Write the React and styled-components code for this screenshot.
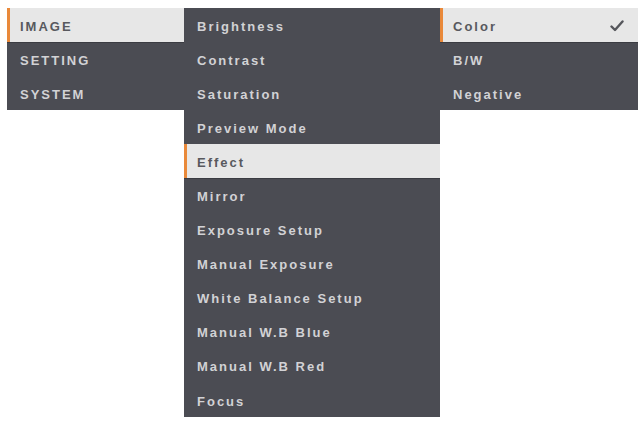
import React from "react";
import styled, { createGlobalStyle } from "styled-components";

const GlobalStyle = createGlobalStyle`
  body {
    margin: 0;
    background: #ffffff;
    font-family: "Liberation Sans", Arial, sans-serif;
  }
`;

const Screen = styled.div`
  display: flex;
  align-items: flex-start;
  padding: 8px 0 0 7px;
  width: 640px;
  height: 421px;
  box-sizing: border-box;
`;

const Column = styled.ul`
  list-style: none;
  margin: 0;
  padding: 0;
  width: ${(p) => p.width}px;
  background: #4b4c53;
`;

const Row = styled.li`
  position: relative;
  display: flex;
  align-items: center;
  justify-content: space-between;
  height: 34.1px;
  padding: 2px 14px 0 13px;
  box-sizing: border-box;
  font-size: 13px;
  font-weight: bold;
  letter-spacing: 2px;
  color: ${(p) => (p.active ? "#58595e" : "#d2d2d5")};
  background: ${(p) => (p.active ? "#e7e7e7" : "transparent")};
  box-shadow: ${(p) => (p.active ? "0 1px 0 #3b3c42" : "none")};

  &::before {
    content: "";
    display: ${(p) => (p.active ? "block" : "none")};
    position: absolute;
    left: 0;
    top: 0;
    bottom: 0;
    width: 3px;
    background: #e9893a;
  }
`;

const Check = () => (
  <svg width="14" height="12" viewBox="0 0 14 12">
    <path d="M1.5 6.5 L5 10 L12.5 1.5" fill="none" stroke="#55565b" strokeWidth="2.4" strokeLinecap="round" strokeLinejoin="round" />
  </svg>
);

const mainMenu = ["IMAGE", "SETTING", "SYSTEM"];
const imageMenu = [
  "Brightness",
  "Contrast",
  "Saturation",
  "Preview Mode",
  "Effect",
  "Mirror",
  "Exposure Setup",
  "Manual Exposure",
  "White Balance Setup",
  "Manual W.B Blue",
  "Manual W.B Red",
  "Focus",
];
const effectMenu = ["Color", "B/W", "Negative"];

export default function App() {
  return (
    <>
      <GlobalStyle />
      <Screen>
        <Column width={177}>
          {mainMenu.map((m) => (
            <Row key={m} active={m === "IMAGE"}>
              {m}
            </Row>
          ))}
        </Column>
        <Column width={256}>
          {imageMenu.map((m) => (
            <Row key={m} active={m === "Effect"}>
              {m}
            </Row>
          ))}
        </Column>
        <Column width={198}>
          {effectMenu.map((m) => (
            <Row key={m} active={m === "Color"}>
              {m}
              {m === "Color" && <Check />}
            </Row>
          ))}
        </Column>
      </Screen>
    </>
  );
}
